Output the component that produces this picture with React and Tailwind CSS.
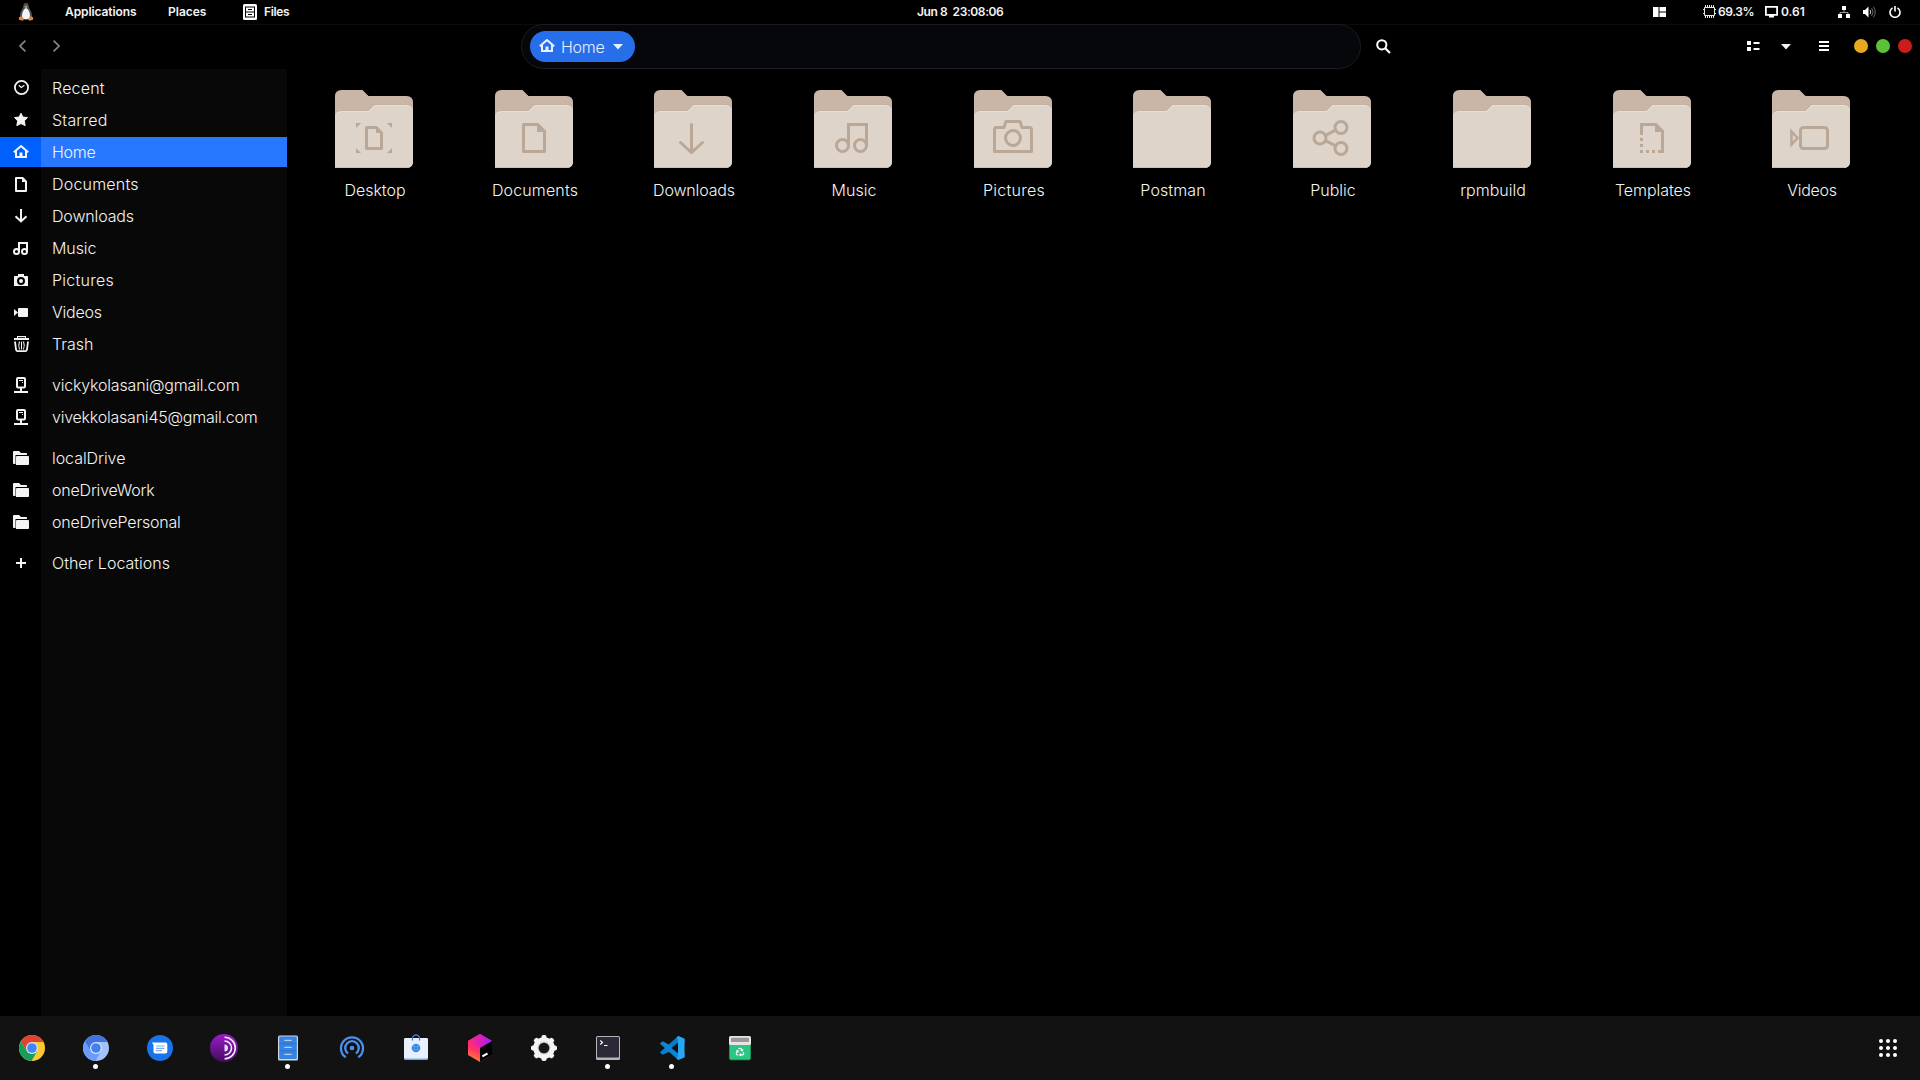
import React from "react";
import { FaRecycle } from "react-icons/fa";

const S = { fill: "none", stroke: "currentColor" };

const sideIcons = {
  recent: (
    <g {...S} strokeWidth="1.8">
      <circle cx="8.5" cy="7.5" r="6.6" />
      <path d="M5.8 5.2 8.3 7.4 11.4 5.2" strokeWidth="1.2" />
    </g>
  ),
  star: <path fill="currentColor" stroke="currentColor" strokeLinejoin="round" d="M8 1.2 9.9 5.1 14.5 5.5 11.3 8.9 12.2 13.6 8 11.6 3.8 13.6 4.7 8.9 1.5 5.5 6.1 5.1Z" />,
  home: (
    <g>
      <path {...S} strokeWidth="2" strokeLinejoin="round" d="M.8 8.2 8 2 15.2 8.2" />
      <path {...S} strokeWidth="2" d="M3 7v6h10V7" />
      <path fill="currentColor" d="M6.5 8.5h3V14h-3z" />
    </g>
  ),
  doc: (
    <g>
      <path {...S} strokeWidth="2" strokeLinejoin="round" d="M3 2h6.6L13 5.4V15H3Z" />
      <path fill="currentColor" d="M9 2v4h4z" />
    </g>
  ),
  down: <path {...S} strokeWidth="2" d="M8 1v13M2.5 8.2 8 13.4l5.500-5.200" />,
  music: (
    <g {...S} strokeWidth="2">
      <circle cx="3.500" cy="11.500" r="2.500" />
      <circle cx="11.500" cy="11.500" r="2.500" />
      <path d="M6 12V3h8v9" />
    </g>
  ),
  camera: (
    <path fill="currentColor" fillRule="evenodd" d="M5 2h6v2h3.200a.8.8 0 0 1 .8.8V14H1V4.800A.8.8 0 0 1 1.800 4H5ZM8 5a4 4 0 1 0 0 8 4 4 0 0 0 0-8Zm0 2a2 2 0 1 1 0 4 2 2 0 0 1 0-4Z" />
  ),
  video: <path fill="currentColor" d="M1 5l4 3.500L1 12ZM6 4h8a1 1 0 0 1 1 1v7a1 1 0 0 1-1 1H6a1 1 0 0 1-1-1V5a1 1 0 0 1 1-1Z" />,
  trash: (
    <g>
      <path fill="currentColor" d="M4 0h9v2h3v2H1V2h3Z" />
      <path fill="#000" d="M5 1.200h7V2H5z" />
      <path {...S} strokeWidth="1.800" d="M2 5.500 3 13.500q.3 1.600 1.800 1.600h7.400q1.500 0 1.800-1.600L15 5.500" />
      <path {...S} strokeWidth="1.100" d="M6.500 5.500q-1.500 4 0 8M8.500 5.500v8M10.500 5.500q1.500 4 0 8" />
    </g>
  ),
  server: (
    <g>
      <rect {...S} x="4" y="1" width="8" height="9.500" rx="1" strokeWidth="2" />
      <path fill="currentColor" d="M6 3h4v1H6zM9 5h1v1H9zM7 11h2v3H7zM1 14h14v2H1z" />
    </g>
  ),
  folder: (
    <g fill="currentColor">
      <path d="M0 2a1 1 0 0 1 1-1h5l2 2h5a1 1 0 0 1 1 1v1H2.500v9H1a1 1 0 0 1-1-1Z" />
      <path d="M3 7a1 1 0 0 1 1-1h11a1 1 0 0 1 1 1v7a1 1 0 0 1-1 1H3Z" />
    </g>
  ),
  plus: <path fill="currentColor" d="M7 3h2v4h4v2H9v4H7V9H3V7h4z" />,
};

const groups = [
  [
    ["recent", "Recent", "tracking-[0.2px]"],
    ["star", "Starred", "tracking-[0.2px]"],
    ["home", "Home", "tracking-[-0.3px]"],
    ["doc", "Documents", "tracking-[0.2px]"],
    ["down", "Downloads", "tracking-[-0.15px]"],
    ["music", "Music", "tracking-[-0.1px]"],
    ["camera", "Pictures", "tracking-[0.25px]"],
    ["video", "Videos", "tracking-[-0.25px]"],
    ["trash", "Trash", ""],
  ],
  [
    ["server", "vickykolasani@gmail.com", "tracking-[-0.18px]"],
    ["server", "vivekkolasani45@gmail.com", "tracking-[-0.22px]"],
  ],
  [
    ["folder", "localDrive", "tracking-[-0.05px]"],
    ["folder", "oneDriveWork", "tracking-[-0.2px]"],
    ["folder", "oneDrivePersonal", "tracking-[-0.2px]"],
  ],
  [["plus", "Other Locations", ""]],
];

const G = { fill: "none", stroke: "#baa796", strokeWidth: 3 };
const F = { fill: "#baa796" };

const glyphs = {
  Desktop: (
    <g>
      <path {...G} strokeLinejoin="round" d="M31.500 37.500h9.800l5.200 5.200v15.800h-15Z" />
      <path {...F} d="M41 37v6h6zM21 33h5l-5 5ZM57 33h-5l5 5ZM21 63h5l-5-5ZM57 63h-5l5-5Z" />
    </g>
  ),
  Documents: (
    <g>
      <path {...G} strokeLinejoin="round" d="M28.500 34.500h14.300l6.700 6.700v20.300h-21Z" />
      <path {...F} d="M42 34v8h8z" />
    </g>
  ),
  Downloads: <path {...G} strokeLinecap="round" d="M37.500 34.500v28M26.500 52.500 37.500 62.500l11-10" />,
  Music: (
    <g {...G}>
      <circle cx="28.500" cy="55.500" r="6" />
      <circle cx="46.500" cy="55.500" r="6" />
      <path d="M34.500 56V34.500h18V56" />
    </g>
  ),
  Pictures: (
    <g {...G} strokeLinejoin="round">
      <path d="M20.500 61.500V39.500q0-2 2-2h7.500l2-6h14l2 6h7.500q2 0 2 2v22Z" />
      <circle cx="39" cy="48" r="7.500" />
    </g>
  ),
  Public: (
    <g {...G}>
      <circle cx="27" cy="48" r="6" />
      <circle cx="48" cy="37.500" r="6" />
      <circle cx="48" cy="58.500" r="6" />
      <path d="M32.500 45.300 42.600 40.200M32.500 50.700l10.100 5.100" />
    </g>
  ),
  Templates: (
    <g>
      <path {...G} d="M28.500 45V34.500h14.300l6.700 6.700v20.300H45" />
      <path {...F} d="M42 34v8h8zM27 48h3v3h-3zM27 54h3v3h-3zM27 60h3v3h-3zM33 60h3v3h-3zM39 60h3v3h-3z" />
    </g>
  ),
  Videos: (
    <g {...G}>
      <rect x="28.500" y="37.500" width="27" height="21" rx="3" />
      <path d="M19.500 41.500v13l6-6.500Z" strokeWidth="2.500" />
    </g>
  ),
};

const folders = [
  ["Desktop", ""],
  ["Documents", "tracking-[0.15px]"],
  ["Downloads", "tracking-[-0.15px]"],
  ["Music", ""],
  ["Pictures", "tracking-[0.25px]"],
  ["Postman", "tracking-[0.1px]"],
  ["Public", ""],
  ["rpmbuild", ""],
  ["Templates", "tracking-[-0.05px]"],
  ["Videos", "tracking-[-0.25px]"],
];

function Folder({ name, tracking }) {
  return (
    <div className="flex w-[160px] flex-col items-center">
      <svg width="78" height="78" viewBox="0 0 78 78">
        <path fill="#c9b6a7" d="M0 6.500Q0 0 6.500 0H27.500L33.500 6H71.500Q78 6 78 12.500V40H0Z" />
        <path fill="#b9a494" opacity=".3" d="M0 26Q1 20 6 20H33L38.500 14H72Q78 14 78 20V30H0Z" />
        <path fill="#e8e0d8" d="M0 27.500Q0 21 6.500 21H33.500L39.500 15H71.500Q78 15 78 21.500V71.500Q78 78 71.500 78H0Z" />
        <path fill="#ded4ca" d="M0 28.500Q0 22 6.500 22H34L40 16H71.500Q78 16 78 22.500V71.500Q78 78 71.500 78H0Z" />
        <path fill="#cbbfb4" d="M0 77H74.500L71.500 78H0Z" />
        {glyphs[name]}
      </svg>
      <span className="mt-[10px] pl-[2px] text-base leading-6 whitespace-nowrap">
        <span className={tracking}>{name}</span>
      </span>
    </div>
  );
}

function Caret() {
  return (
    <svg className="mt-px" width="10" height="6" viewBox="0 0 10 6">
      <path fill="currentColor" d="M0 0h10L5 5.500Z" />
    </svg>
  );
}

const dock = [
  {
    id: "chrome",
    art: (
      <g>
        <circle cx="16" cy="16" r="13" fill="#fbc934" />
        <path fill="#dc4437" d="M4.740 9.500A13 13 0 0 1 27.500 10H16L10.800 19Z" />
        <path fill="#12a05c" d="M4.740 9.500A13 13 0 0 0 15.500 29L21.200 19H10.800Z" />
        <circle cx="16" cy="16" r="6" fill="#dfe8f5" />
        <circle cx="16" cy="16" r="4.800" fill="#4285f4" />
      </g>
    ),
  },
  {
    id: "chromium",
    dot: true,
    art: (
      <g>
        <circle cx="16" cy="16" r="13" fill="#a4c2fa" />
        <path fill="#4373dc" d="M4.740 9.500A13 13 0 0 1 27.500 10H16L10.800 19Z" />
        <path fill="#6b9df8" d="M4.740 9.500A13 13 0 0 0 15.500 29L21.200 19H10.800Z" />
        <circle cx="16" cy="16" r="6" fill="#dfe8fb" />
        <circle cx="16" cy="16" r="4.800" fill="#4581ec" />
      </g>
    ),
  },
  {
    id: "messages",
    art: (
      <g>
        <circle cx="16" cy="16" r="13" fill="#1a73e8" />
        <path fill="#fff" d="M8 10.500h13.500a1.800 1.800 0 0 1 1.800 1.800v7.400a1.800 1.800 0 0 1-1.800 1.800H11.300a1.800 1.800 0 0 1-1.800-1.800v-6.700Z" />
        <path stroke="#7fb0f3" strokeWidth="1.200" d="M12 14h8.500M12 16.300h8.500M12 18.600h6" />
      </g>
    ),
  },
  {
    id: "tor",
    art: (
      <g>
        <circle cx="16" cy="16" r="14" fill="url(#tor)" />
        <g fill="none" stroke="#f6e8fb" strokeWidth="1.600">
          <path d="M16.500 5.200a10.800 10.800 0 0 1 0 21.600" />
          <path d="M16.500 9a7 7 0 0 1 0 14" />
        </g>
        <path fill="#f0d9f8" d="M16.500 12.500a3.500 3.500 0 0 1 0 7Z" />
      </g>
    ),
  },
  {
    id: "files",
    dot: true,
    art: (
      <g>
        <rect x="6" y="3.500" width="20" height="25" rx="1.500" fill="#d3d6da" />
        <rect x="7.200" y="4.500" width="17.600" height="22.500" fill="#3584e4" />
        <path stroke="#2a6fc4" strokeWidth=".8" d="M7.200 11.700h17.600M7.200 19h17.600" />
        <path stroke="#b9cfee" strokeWidth="1.300" fill="none" d="M13 9V8.300h6V9M13 16v-.7h6v.7M13 23v-.7h6v.7" />
      </g>
    ),
  },
  {
    id: "podcasts",
    art: (
      <g fill="none" stroke="#4b90ec" strokeWidth="2.300">
        <path d="M9.700 25.300a11 11 0 1 1 12.600 0" />
        <path d="M12 21.500a6.800 6.800 0 1 1 8 0" />
        <circle cx="16" cy="16" r="2.300" fill="#4b90ec" stroke="none" />
      </g>
    ),
  },
  {
    id: "software",
    art: (
      <g>
        <rect x="4" y="7" width="24" height="21" rx="1.200" fill="#7ba7ea" />
        <rect x="4" y="6" width="24" height="20.500" rx="1.200" fill="#e9effd" />
        <path d="M12.500 8.500V6.500a3.500 3.500 0 0 1 7 0V8.500" fill="none" stroke="#3f7fd0" strokeWidth="1.300" />
        <circle cx="16" cy="16" r="4.300" fill="#3584e4" />
        <path d="M14.500 12v8M17.500 12v8M12 14.500h8M12 17.500h8" stroke="#6ca5ec" strokeWidth=".6" />
      </g>
    ),
  },
  {
    id: "toolbox",
    art: (
      <g>
        <path fill="url(#jb)" d="M16 2 28 9v14l-12 7L4 23V9Z" />
        <path fill="url(#jb2)" d="M16 2 28 9 16 16 4 9Z" />
        <path fill="#000" d="M16 16 28 9v14l-12 7Z" />
        <path stroke="#fff" strokeWidth="2" d="M18.300 24.300 23.500 21.500" />
      </g>
    ),
  },
  {
    id: "settings",
    art: (
      <g fill="#f4f3f1">
        {[0, 45, 90, 135, 180, 225, 270, 315].map((a) => (
          <rect key={a} x="13.500" y="3" width="5" height="6" rx="1.800" transform={`rotate(${a} 16 16)`} />
        ))}
        <circle cx="16" cy="16" r="10.800" />
        <circle cx="16" cy="16" r="6.400" fill="#c9c7c4" />
        <circle cx="16" cy="16" r="5.300" fill="#161616" />
      </g>
    ),
  },
  {
    id: "terminal",
    dot: true,
    art: (
      <g>
        <rect x="4" y="4" width="24" height="24" rx="1.500" fill="#b4b3b5" />
        <rect x="5" y="5" width="22" height="20.500" rx=".8" fill="#2d2838" />
        <path d="M8.300 8.500 10.500 10.500 8.300 12.500M12 13.500h3.500" fill="none" stroke="#fff" strokeWidth="1.100" />
      </g>
    ),
  },
  {
    id: "vscode",
    dot: true,
    art: (
      <g>
        <path fill="#0a7ccb" d="M22.200 4 28.500 6.700V13L6.800 22.700 3.800 20.400Z" />
        <path fill="#0b86d6" d="M3.800 11.600 6.800 9.300 28.500 21v4.300L22.200 28Z" />
        <path fill="#29a7f2" d="M22.200 4 28.500 6.700V25.300L22.200 28 20.800 26.500 22 24V8L20.800 5.500Z" />
        <path fill="#121212" d="M22 10.800v10.400L15.300 16Z" />
      </g>
    ),
  },
  {
    id: "trash",
    art: (
      <g>
        <rect x="5.500" y="10" width="21" height="18.200" rx="1.500" fill="#22a369" />
        <rect x="5.500" y="10" width="21" height="17" rx="1" fill="#2cc684" />
        <rect x="5" y="4" width="22" height="9" rx="1.500" fill="#e6e5e3" />
        <rect x="7" y="5.800" width="18" height="4.200" rx=".8" fill="#9a9996" />
        <FaRecycle x="11.500" y="15.500" size={9} color="#fff" />
      </g>
    ),
  },
];

function Penguin() {
  return (
    <svg width="16" height="18" viewBox="0 0 16 18">
      <path fill="#4a5560" d="M8 0c2 0 2.700 1.500 2.700 3.300 0 2.200 3.300 5 3.300 9.200L12 16H4l-2-3.500c0-4.200 3.300-7 3.300-9.200C5.300 1.500 6 0 8 0Z" />
      <path fill="#f5f5f5" d="M8 5c2 1 4 4 4 7.500C12 15 10.500 16.500 8 16.500S4 15 4 12.500C4 9 6 6 8 5Z" />
      <path fill="#e8a04a" d="M6.300 3.500 8 3l1.700.5L8 5.300Z" />
      <path fill="#e08a35" d="M.8 14.500 3 13l3 3.500-1.200 1.200L1 16.800ZM15.200 14.500 13 13l-3 3.500 1.200 1.200 3.800-.9Z" />
    </svg>
  );
}

function TopBar() {
  return (
    <header className="flex h-[25px] shrink-0 items-center border-b border-[#0b0b0b] text-[12px] font-semibold">
      <div className="flex w-[917px] items-center pl-[18px]">
        <Penguin />
        <span className="ml-[31px] w-[103px] tracking-[-0.1px]">Applications</span>
        <span className="w-[75px]">Places</span>
        <svg width="14" height="16" viewBox="0 0 14 16">
          <rect width="14" height="16" rx="1.500" fill="#fff" />
          <path fill="#000" d="M2 2.500h10v11H2z" />
          <path fill="#fff" d="M3 3.500h8v4H3zM3 8.500h8v4H3z" />
          <path fill="#000" d="M5 5h4v1H5zM5 10h4v1H5z" />
        </svg>
        <span className="ml-[7px] tracking-[-0.35px]">Files</span>
      </div>
      <span className="w-[736px] tracking-[-0.4px] whitespace-pre">Jun 8  23:08:06</span>
      <svg width="13" height="10" viewBox="0 0 13 10">
        <path fill="#fff" d="M0 0h5.500v10H0zM6.500 0H13v4.500H6.500zM6.500 5.500H13V10H6.500z" />
      </svg>
      <svg className="mb-px ml-[37px]" width="13" height="13" viewBox="0 0 13 13">
        <path fill="none" stroke="#e8e8e8" d="M1.500 2.500h10v8h-10z" />
        <path fill="#e8e8e8" d="M2 0h1v2H2zM4 0h1v2H4zM6 0h1v2H6zM8 0h1v2H8zM10 0h1v2h-1zM2 11h1v2H2zM4 11h1v2H4zM6 11h1v2H6zM8 11h1v2H8zM10 11h1v2h-1zM0 4h1v1H0zM0 8h1v1H0zM12 4h1v1h-1zM12 8h1v1h-1z" />
      </svg>
      <span className="ml-[2px] w-[47px] tracking-[-0.4px]">69.3%</span>
      <svg width="13" height="12" viewBox="0 0 13 12">
        <path fill="none" stroke="#fff" strokeWidth="1.800" d="M.9.9h11.200v8H.9z" />
        <path fill="#fff" d="M4 9h5v2.500H4z" />
      </svg>
      <span className="ml-[3px] w-[57px]">0.61</span>
      <svg width="12" height="12" viewBox="0 0 12 12">
        <path fill="#fff" d="M4 0h4v4H4zM0 8h4v4H0zM8 8h4v4H8z" />
        <path fill="none" stroke="#999" d="M6 4v2M2 8V6.500h8V8" />
      </svg>
      <svg className="ml-[13px]" width="13" height="12" viewBox="0 0 13 12">
        <path fill="#fff" d="M0 4h2l3.500-3.500v11L2 8H0Z" />
        <path fill="none" stroke="#ccc" d="M7 3.800q1.500 2.200 0 4.400" />
        <path fill="none" stroke="#666" d="M8.600 2q3 4 0 8M10.400.6q3.600 5.400 0 10.800" />
      </svg>
      <svg className="ml-[13px]" width="12" height="12" viewBox="0 0 12 12">
        <path fill="none" stroke="#fff" strokeWidth="1.600" d="M3.600 1.900a5 5 0 1 0 4.800 0M6 0v5.500" />
      </svg>
    </header>
  );
}

function HeaderBar() {
  return (
    <div className="-mt-px flex h-[45px] shrink-0 items-center">
      <div className="mb-px flex w-[521px] gap-[27px] pl-[19px] text-[#858585]">
        <svg width="7" height="12" viewBox="0 0 7 12"><path {...S} strokeWidth="1.700" d="M6.400.6 1 6l5.400 5.400" /></svg>
        <svg width="7" height="12" viewBox="0 0 7 12"><path {...S} strokeWidth="1.700" d="M.6.6 6 6 .6 11.400" /></svg>
      </div>
      <div className="flex h-[45px] w-[840px] items-center rounded-full border border-[#1b1c1e] bg-[#06070b] pl-2">
        <div className="flex h-[31px] w-[105px] items-center rounded-full bg-[#276eea] pl-[9px] text-[#e9f0fd]">
          <svg className="mb-px" width="16" height="16" viewBox="0 0 16 16">{sideIcons.home}</svg>
          <span className="ml-[6px] w-[52px] text-base font-light tracking-[-0.25px]">Home</span>
          <Caret />
        </div>
      </div>
      <svg className="ml-[15px]" width="15" height="15" viewBox="0 0 15 15">
        <circle cx="5.800" cy="5.800" r="4.600" fill="none" stroke="#fff" strokeWidth="2" />
        <path stroke="#fff" strokeWidth="2.200" d="m9 9 5 5" />
      </svg>
      <svg className="mb-px ml-[356px]" width="13" height="10" viewBox="0 0 13 10">
        <path fill="#fff" d="M0 0h4v4H0zM0 6h4v4H0zM6.500 1h6v2h-6zM6.500 7h6v2h-6z" />
      </svg>
      <div className="ml-[21px] flex"><Caret /></div>
      <svg className="mb-px ml-[28px]" width="10" height="10" viewBox="0 0 10 10">
        <path fill="#fff" d="M0 0h10v2H0zM0 4h10v2H0zM0 8h10v2H0z" />
      </svg>
      <div className="mb-px ml-[25px] flex gap-2">
        <i className="size-[14px] rounded-full bg-[#e8a91e]" />
        <i className="size-[14px] rounded-full bg-[#5bc236]" />
        <i className="size-[14px] rounded-full bg-[#cc1b1b]" />
      </div>
    </div>
  );
}

function Sidebar() {
  return (
    <nav className="flex w-[287px] shrink-0 flex-col gap-[11px] bg-linear-to-r from-black from-[41px] to-[#080808] to-[41px] pt-1 text-base font-light">
      {groups.map((rows) => (
        <div key={rows[0][1]} className="flex flex-col gap-[2px]">
          {rows.map(([icon, label, tracking]) => {
            const active = label === "Home";
            return (
              <div key={label} className="flex h-[30px]">
                <div className={active ? "flex w-[41px] items-center bg-[#0060fd] pl-[13px]" : "flex w-[41px] items-center pl-[13px]"}>
                  <svg width="16" height="16" viewBox="0 0 16 16">{sideIcons[icon]}</svg>
                </div>
                <div className={active ? "flex flex-1 items-center bg-[#2878ff] pl-[11px]" : "flex flex-1 items-center pl-[11px]"}>
                  <span className={tracking}>{label}</span>
                </div>
              </div>
            );
          })}
        </div>
      ))}
    </nav>
  );
}

function Dock() {
  return (
    <footer className="flex h-16 shrink-0 items-center bg-[#121212]">
      <svg width="0" height="0">
        <defs>
          <linearGradient id="tor" x1="0" y1="0" x2="0" y2="1"><stop stopColor="#9a1cc8" /><stop offset="1" stopColor="#420c5d" /></linearGradient>
          <linearGradient id="jb" x1="0" y1="1" x2=".4" y2="0"><stop stopColor="#ff9a1f" /><stop offset=".5" stopColor="#ff2d6b" /><stop offset="1" stopColor="#f0289a" /></linearGradient>
          <linearGradient id="jb2" x1="0" y1=".5" x2="1" y2=".5"><stop stopColor="#ff2c74" /><stop offset=".5" stopColor="#d822b8" /><stop offset="1" stopColor="#9a1cff" /></linearGradient>
        </defs>
      </svg>
      {dock.map((d) => (
        <div key={d.id} className={d.id === "trash" ? "relative ml-1 flex h-16 w-16 items-center justify-center" : "relative flex h-16 w-16 items-center justify-center"}>
          <svg width="32" height="32" viewBox="0 0 32 32">{d.art}</svg>
          {d.dot && <i className="absolute top-12 left-[29px] size-[5px] rounded-full bg-white" />}
        </div>
      ))}
      <div className="mr-[23px] ml-auto grid grid-cols-3 gap-[3px]">
        {[0, 1, 2, 3, 4, 5, 6, 7, 8].map((n) => <i key={n} className="size-1 rounded-full bg-white" />)}
      </div>
    </footer>
  );
}

export default function App() {
  return (
    <div className="flex h-[1080px] w-[1920px] flex-col overflow-hidden bg-black font-['Inter',sans-serif] text-[#f4f4f4]">
      <TopBar />
      <HeaderBar />
      <div className="flex min-h-0 flex-1">
        <Sidebar />
        <main className="pt-[21px] pl-[7px] font-light">
          <div className="grid grid-cols-[160px_159px_160px_160px_159px_160px_160px_160px_159px_160px]">
            {folders.map(([name, tracking]) => <Folder key={name} name={name} tracking={tracking} />)}
          </div>
        </main>
      </div>
      <Dock />
    </div>
  );
}
